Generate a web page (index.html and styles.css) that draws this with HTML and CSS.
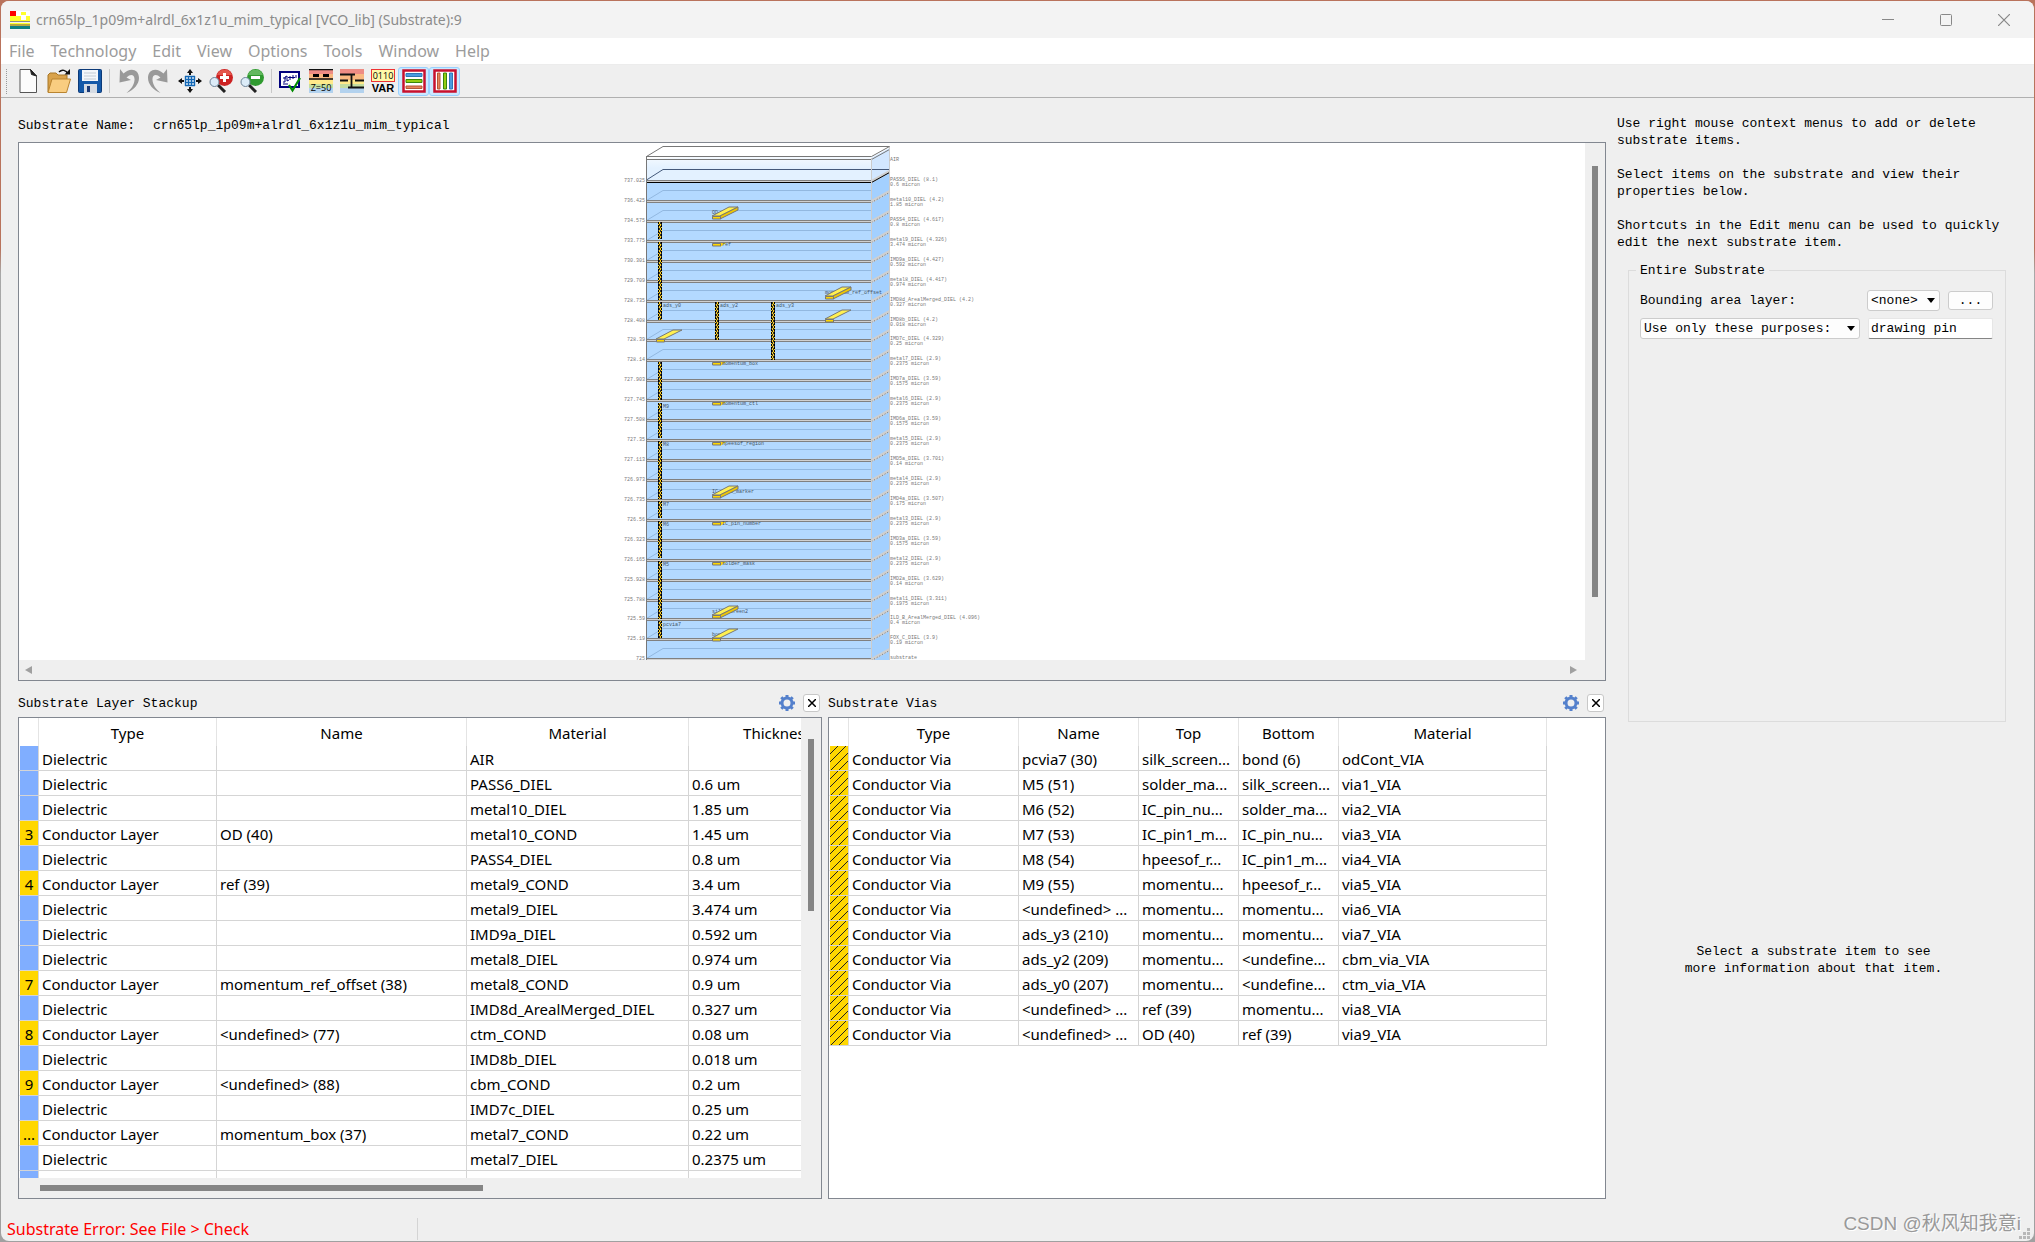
FILE: index.html
```html
<!DOCTYPE html>
<html lang="en">
<head>
<meta charset="utf-8">
<title>Substrate Editor</title>
<link rel="stylesheet" href="styles.css">
</head>
<body>
<div class="window">
  <header class="titlebar">
    <svg class="app-icon" width="20" height="18" viewBox="0 0 20 18"><path fill="#ffff2a" d="M0 5h20v5H0zM0 12h20v1.500H0z"/><path fill="#fff" d="M6 0h14v5H6zM11 5h5v4h-5z"/><path fill="#ffff2a" d="M11 1h5v3h-5z"/><path fill="#f00" d="M0 0h6v5H0z"/><path fill="#8a8a8a" d="M0 10h20v1H0z"/><path fill="#b8a642" d="M0 13h20v2H0z"/><path fill="#108080" d="M0 15h20v3H0z"/></svg>
    <h1 class="title">crn65lp_1p09m+alrdl_6x1z1u_mim_typical [VCO_lib] (Substrate):9</h1>
    <div class="caption-buttons">
      <button type="button" aria-label="Minimize"><svg width="12" height="12"><path d="M0 5.500h12" stroke="#888"/></svg></button>
      <button type="button" aria-label="Maximize"><svg width="12" height="12"><rect x=".5" y=".5" width="11" height="11" rx="1" fill="none" stroke="#888"/></svg></button>
      <button type="button" aria-label="Close"><svg width="12" height="12"><path d="M0 0l12 12M12 0L0 12" stroke="#888" stroke-width="1.200"/></svg></button>
    </div>
  </header>
  <nav class="menubar">
    <button type="button">File</button><button type="button">Technology</button><button type="button">Edit</button><button type="button">View</button><button type="button">Options</button><button type="button">Tools</button><button type="button">Window</button><button type="button">Help</button>
  </nav>
  <div class="toolbar">
    <span class="grip"></span>
    <button type="button" aria-label="New"><svg width="24" height="24" viewBox="0 0 24 24"><path d="M4 .5h10.500L20.500 7v16.500H4z" fill="#fcfcfc" stroke="#555"/><path d="M14.500.5L20.500 7l-5-1.500z" fill="#222" stroke="#222"/></svg></button>
    <button type="button" aria-label="Open"><svg width="24" height="24" viewBox="0 0 24 24"><path d="M1 23V6l2-2h6l2 2h9v5" fill="#d9a24a" stroke="#a87626"/><path d="M1 23.500L5 10h18.500l-4 13.500z" fill="#f9cd80" stroke="#b98430"/><path d="M12 3c3-3 7-2 9 2" fill="none" stroke="#111" stroke-width="1.500"/><path d="M17.500 5.500H23V0z" fill="#111"/></svg></button>
    <button type="button" aria-label="Save"><svg width="24" height="24" viewBox="0 0 24 24"><rect x=".5" y=".5" width="23" height="23" rx="1" fill="#1559a8" stroke="#0c3a78"/><path d="M4 1h16v11H4z" fill="#f4f7fa"/><path d="M6 4h12M6 7h12M6 10h12" stroke="#c3ccd4"/><path d="M6 15h13v9H6z" fill="#d5dbe3"/><path d="M9 17h3v6H9z" fill="#1c3b78"/></svg></button>
    <span class="sep"></span>
    <button type="button" aria-label="Undo"><svg width="24" height="24" viewBox="0 0 24 24"><path d="M4 0L3.500 13.500L15 11L10.500 8.500C15 4 19 6 18.500 11C18.200 16 15 20 10.500 24C18 21 23 15 23 9C23 0 14-2 7.500 4.500z" fill="#999"/></svg></button>
    <button type="button" aria-label="Redo"><svg width="24" height="24" viewBox="0 0 24 24"><path d="M20 0L20.500 13.500L9 11L13.500 8.500C9 4 5 6 5.500 11C5.800 16 9 20 13.500 24C6 21 1 15 1 9C1 0 10-2 16.500 4.500z" fill="#999"/></svg></button>
    <button type="button" aria-label="View all"><svg width="24" height="24" viewBox="0 0 24 24"><path d="M7 7h10v10H7z" fill="#fff"/><path d="M7.500 7v10M10.500 7v10M13.500 7v10M16.500 7v10M7 7.500h10M7 10.500h10M7 13.500h10M7 16.500h10" stroke="#1267b5" stroke-width="1.400"/><path d="M12 6V3M12 18v3M6 12H3M18 12h3" stroke="#111" stroke-width="2"/><path d="M12 0l3 4H9zM12 24l3-4H9zM0 12l4-3v6zM24 12l-4-3v6z" fill="#111"/></svg></button>
    <button type="button" aria-label="Zoom in"><svg width="24" height="24" viewBox="0 0 24 24"><circle cx="15.500" cy="8.500" r="8.500" fill="#cc2222"/><path d="M8 6a8 8 0 0 1 15 0z" fill="#e4564c"/><path d="M15.500 4v9M11 8.500h9" stroke="#fff" stroke-width="3"/><path d="M9 16l7 7" stroke="#222" stroke-width="3"/><circle cx="5.500" cy="13" r="4.500" fill="#dcecf8" stroke="#6d8398"/></svg></button>
    <button type="button" aria-label="Zoom out"><svg width="24" height="24" viewBox="0 0 24 24"><circle cx="15.500" cy="8.500" r="8.500" fill="#2f9a2f"/><path d="M8 6a8 8 0 0 1 15 0z" fill="#62b85e"/><path d="M11 8.500h9" stroke="#fff" stroke-width="3"/><path d="M9 16l7 7" stroke="#222" stroke-width="3"/><circle cx="5.500" cy="13" r="4.500" fill="#dcecf8" stroke="#6d8398"/></svg></button>
    <span class="sep"></span>
    <button type="button" aria-label="Check"><svg width="24" height="24" viewBox="0 0 24 24"><path d="M2 3h19v15H2z" fill="#fff" stroke="#00007c" stroke-width="2"/><path d="M5 13h2V8l2-1v5l2-1M5 9h3M12 7v4M10 8.500h7M15 6v4M5 15h5M18 6v3" stroke="#00007c" fill="none"/><path d="M11 16l3.500 5.500L22 9" fill="none" stroke="#008a00" stroke-width="2.200"/></svg></button>
    <button type="button" aria-label="Impedance"><svg width="24" height="24" viewBox="0 0 24 24"><path d="M0 0h24v5H0z" fill="#ee8c84"/><path d="M0 5h24v6H0z" fill="#f9b880"/><path d="M0 11h24v4H0z" fill="#ffe98a"/><path d="M0 15h24v4H0z" fill="#c3dda0"/><path d="M0 19h24v5H0z" fill="#b3d2ee"/><path d="M0 .5h24M0 10h24" stroke="#111" stroke-width="1.500"/><path d="M4 5h6v3H4zM14 5h6v3h-6z"/><text x="12" y="22" text-anchor="middle" class="icon-text">Z=50</text></svg></button>
    <button type="button" aria-label="Interconnect"><svg width="24" height="24" viewBox="0 0 24 24"><path d="M0 0h24v5H0z" fill="#ee8c84"/><path d="M0 5h24v6H0z" fill="#f9b880"/><path d="M0 11h24v4H0z" fill="#ffe98a"/><path d="M0 15h24v4H0z" fill="#c3dda0"/><path d="M0 19h24v5H0z" fill="#b3d2ee"/><path d="M0 5.500h15M0 11.500h8M8 18.500h16M15 11.500h9M11.500 6v13" stroke="#111" stroke-width="1.800"/></svg></button>
    <button type="button" aria-label="Variables"><svg width="24" height="24" viewBox="0 0 24 24"><rect x=".5" y=".5" width="23" height="12" fill="#fff9a8" stroke="#e33"/><text x="12" y="10" text-anchor="middle" class="icon-text">0110</text><text x="12" y="23" text-anchor="middle" class="icon-text bold">VAR</text></svg></button>
    <button type="button" class="on" aria-label="Layer stackup"><svg width="24" height="24" viewBox="0 0 24 24"><path d="M1.500 1.500h21v21h-21z" fill="#fff" stroke="#c8102e" stroke-width="2.500"/><path d="M4 4.500h16v3H4z" fill="#4a9be0" stroke="#2c76b8"/><path d="M4 10.500h16v3H4z" fill="#94cc10" stroke="#38860a"/><path d="M4 17h16v2.500H4z" fill="#e8835c" stroke="#b35636"/></svg></button>
    <button type="button" class="on" aria-label="Vias"><svg width="24" height="24" viewBox="0 0 24 24"><path d="M1.500 1.500h21v21h-21z" fill="#fff" stroke="#c8102e" stroke-width="2.500"/><path d="M4.500 4h2.500v16H4.500z" fill="#e8835c" stroke="#b35636"/><path d="M10.500 4h3v16h-3z" fill="#94cc10" stroke="#38860a"/><path d="M16.500 4h3v16h-3z" fill="#4a9be0" stroke="#2c76b8"/></svg></button>
  </div>

  <main class="content">
    <div class="left">
      <p class="name-line"><span>Substrate Name:</span><span>crn65lp_1p09m+alrdl_6x1z1u_mim_typical</span></p>
      <section class="frame canvas">
        <div class="canvas-view"><svg id="stack" width="360" height="518" viewBox="622 143 360 518"></svg></div>
        <div class="vscroll"><span class="thumb"></span></div>
        <div class="hscroll-arrows"><span class="arrow-l"></span><span class="arrow-r"></span></div>
      </section>
      <div class="panels">
        <section class="panel stackup">
          <div class="panel-head"><h2>Substrate Layer Stackup</h2>
            <button type="button" class="gear" aria-label="Settings"><svg width="16" height="16" viewBox="0 0 16 16"><circle cx="8" cy="8" r="5" fill="none" stroke="#5480cc" stroke-width="3"/><path d="M8 0v3M8 13v3M0 8h3M13 8h3M2.300 2.300l2 2M11.700 11.700l2 2M2.300 13.700l2-2M11.700 4.300l2-2" stroke="#5480cc" stroke-width="3"/></svg></button>
            <button type="button" class="close" aria-label="Close panel"><svg width="8" height="8"><path d="M0 0l8 8M8 0L0 8" stroke="#000" stroke-width="1.500"/></svg></button></div>
          <div class="frame table-frame">
            <div class="table-view">
            <table class="stackup-table">
              <colgroup><col class="c-mark"><col class="c178"><col class="c250"><col class="c222"><col class="c178"></colgroup>
              <thead><tr><th></th><th>Type</th><th>Name</th><th>Material</th><th>Thickness</th></tr></thead>
              <tbody>
                <tr><td class="d"></td><td>Dielectric</td><td></td><td>AIR</td><td></td></tr>
                <tr><td class="d"></td><td>Dielectric</td><td></td><td>PASS6_DIEL</td><td>0.6 um</td></tr>
                <tr><td class="d"></td><td>Dielectric</td><td></td><td>metal10_DIEL</td><td>1.85 um</td></tr>
                <tr><td class="c">3</td><td>Conductor Layer</td><td>OD (40)</td><td>metal10_COND</td><td>1.45 um</td></tr>
                <tr><td class="d"></td><td>Dielectric</td><td></td><td>PASS4_DIEL</td><td>0.8 um</td></tr>
                <tr><td class="c">4</td><td>Conductor Layer</td><td>ref (39)</td><td>metal9_COND</td><td>3.4 um</td></tr>
                <tr><td class="d"></td><td>Dielectric</td><td></td><td>metal9_DIEL</td><td>3.474 um</td></tr>
                <tr><td class="d"></td><td>Dielectric</td><td></td><td>IMD9a_DIEL</td><td>0.592 um</td></tr>
                <tr><td class="d"></td><td>Dielectric</td><td></td><td>metal8_DIEL</td><td>0.974 um</td></tr>
                <tr><td class="c">7</td><td>Conductor Layer</td><td>momentum_ref_offset (38)</td><td>metal8_COND</td><td>0.9 um</td></tr>
                <tr><td class="d"></td><td>Dielectric</td><td></td><td>IMD8d_ArealMerged_DIEL</td><td>0.327 um</td></tr>
                <tr><td class="c">8</td><td>Conductor Layer</td><td>&lt;undefined&gt; (77)</td><td>ctm_COND</td><td>0.08 um</td></tr>
                <tr><td class="d"></td><td>Dielectric</td><td></td><td>IMD8b_DIEL</td><td>0.018 um</td></tr>
                <tr><td class="c">9</td><td>Conductor Layer</td><td>&lt;undefined&gt; (88)</td><td>cbm_COND</td><td>0.2 um</td></tr>
                <tr><td class="d"></td><td>Dielectric</td><td></td><td>IMD7c_DIEL</td><td>0.25 um</td></tr>
                <tr><td class="c">...</td><td>Conductor Layer</td><td>momentum_box (37)</td><td>metal7_COND</td><td>0.22 um</td></tr>
                <tr><td class="d"></td><td>Dielectric</td><td></td><td>metal7_DIEL</td><td>0.2375 um</td></tr>
                <tr><td class="d"></td><td></td><td></td><td></td><td></td></tr>
              </tbody>
            </table>
            </div>
            <div class="vscroll"><span class="thumb"></span></div>
            <div class="hscroll"><span class="thumb"></span></div>
          </div>
        </section>
        <section class="panel vias">
          <div class="panel-head"><h2>Substrate Vias</h2>
            <button type="button" class="gear" aria-label="Settings"><svg width="16" height="16" viewBox="0 0 16 16"><circle cx="8" cy="8" r="5" fill="none" stroke="#5480cc" stroke-width="3"/><path d="M8 0v3M8 13v3M0 8h3M13 8h3M2.300 2.300l2 2M11.700 11.700l2 2M2.300 13.700l2-2M11.700 4.300l2-2" stroke="#5480cc" stroke-width="3"/></svg></button>
            <button type="button" class="close" aria-label="Close panel"><svg width="8" height="8"><path d="M0 0l8 8M8 0L0 8" stroke="#000" stroke-width="1.500"/></svg></button></div>
          <div class="frame table-frame plain">
            <table class="vias-table">
              <colgroup><col class="c-mark"><col class="c170"><col class="c120"><col class="c100"><col class="c100"><col class="c208"></colgroup>
              <thead><tr><th></th><th>Type</th><th>Name</th><th>Top</th><th>Bottom</th><th>Material</th></tr></thead>
              <tbody>
                <tr><td class="v"></td><td>Conductor Via</td><td>pcvia7 (30)</td><td>silk_screen...</td><td>bond (6)</td><td>odCont_VIA</td></tr>
                <tr><td class="v"></td><td>Conductor Via</td><td>M5 (51)</td><td>solder_ma...</td><td>silk_screen...</td><td>via1_VIA</td></tr>
                <tr><td class="v"></td><td>Conductor Via</td><td>M6 (52)</td><td>IC_pin_nu...</td><td>solder_ma...</td><td>via2_VIA</td></tr>
                <tr><td class="v"></td><td>Conductor Via</td><td>M7 (53)</td><td>IC_pin1_m...</td><td>IC_pin_nu...</td><td>via3_VIA</td></tr>
                <tr><td class="v"></td><td>Conductor Via</td><td>M8 (54)</td><td>hpeesof_r...</td><td>IC_pin1_m...</td><td>via4_VIA</td></tr>
                <tr><td class="v"></td><td>Conductor Via</td><td>M9 (55)</td><td>momentu...</td><td>hpeesof_r...</td><td>via5_VIA</td></tr>
                <tr><td class="v"></td><td>Conductor Via</td><td>&lt;undefined&gt; ...</td><td>momentu...</td><td>momentu...</td><td>via6_VIA</td></tr>
                <tr><td class="v"></td><td>Conductor Via</td><td>ads_y3 (210)</td><td>momentu...</td><td>momentu...</td><td>via7_VIA</td></tr>
                <tr><td class="v"></td><td>Conductor Via</td><td>ads_y2 (209)</td><td>momentu...</td><td>&lt;undefine...</td><td>cbm_via_VIA</td></tr>
                <tr><td class="v"></td><td>Conductor Via</td><td>ads_y0 (207)</td><td>momentu...</td><td>&lt;undefine...</td><td>ctm_via_VIA</td></tr>
                <tr><td class="v"></td><td>Conductor Via</td><td>&lt;undefined&gt; ...</td><td>ref (39)</td><td>momentu...</td><td>via8_VIA</td></tr>
                <tr><td class="v"></td><td>Conductor Via</td><td>&lt;undefined&gt; ...</td><td>OD (40)</td><td>ref (39)</td><td>via9_VIA</td></tr>
              </tbody>
            </table>
          </div>
        </section>
      </div>
    </div>
    <aside class="side">
      <p>Use right mouse context menus to add or delete<br>substrate items.</p>
      <p>Select items on the substrate and view their<br>properties below.</p>
      <p>Shortcuts in the Edit menu can be used to quickly<br>edit the next substrate item.</p>
      <fieldset class="group">
        <legend>Entire Substrate</legend>
        <div class="row">
          <label for="bound">Bounding area layer:</label>
          <span class="select area"><select id="bound"><option>&lt;none&gt;</option></select></span>
          <button type="button" class="more">...</button>
        </div>
        <div class="row">
          <span class="select purposes"><select aria-label="Purposes filter"><option>Use only these purposes:</option></select></span>
          <input type="text" aria-label="Purposes" value="drawing pin">
        </div>
      </fieldset>
      <p class="hint">Select a substrate item to see<br>more information about that item.</p>
    </aside>
  </main>
  <footer class="status"><span class="error">Substrate Error: See File &gt; Check</span></footer>
  <svg class="size-grip" width="12" height="12"><path d="M8 0h3v3H8zM4 4h3v3H4zM8 4h3v3H8zM0 8h3v3H0zM4 8h3v3H4zM8 8h3v3H8z" fill="#b8b8b8"/></svg>
  <span class="watermark">CSDN @秋风知我意i</span>
</div>
<script src="stack.js"></script>
</body>
</html>
```
FILE: styles.css
```css
* { box-sizing: border-box; }
body {
  margin: 0;
  height: 100vh;
  padding: 1px;
  background: linear-gradient(#b9735c 0, #b9735c 20%, #a8a8a8 22%, #a0a0a0 100%);
  font: 16px/20px "Noto Sans", "Noto Sans CJK SC", sans-serif;
  color: #000;
  overflow: hidden;
}
h1, h2, p { margin: 0; font-size: inherit; font-weight: normal; }
button { font: inherit; color: inherit; border: 0; padding: 0; background: none; }
.window {
  position: relative;
  height: 100%;
  display: flex;
  flex-direction: column;
  background: #efefef;
  border-radius: 8px;
  overflow: hidden;
}
.titlebar { height: 37px; flex: none; display: flex; align-items: center; padding-left: 9px; background: #f3f3f3; color: #8c8c8c; }
.app-icon { margin-right: 6px; }
.title { flex: 1; font-size: 14px; }
.caption-buttons { display: flex; padding-right: 1px; }
.caption-buttons button { width: 58px; height: 36px; display: grid; place-items: center; }
.menubar { height: 27px; flex: none; display: flex; gap: 16px; padding-left: 8px; background: #fff; color: #9c9c9c; border-bottom: 1px solid #ececec; }
.toolbar { height: 33px; flex: none; display: flex; align-items: center; padding-left: 5px; border-bottom: 1px solid #b0b0b0; }
.toolbar button { width: 31px; height: 29px; display: grid; place-items: center; }
.toolbar .on { background: #cce8ff; border: 1px solid #99d1ff; border-radius: 3px; }
.grip { width: 6px; height: 25px; border-left: 1px dotted #999; }
.sep { width: 7px; height: 24px; background: linear-gradient(#c8c8c8, #c8c8c8) 4px 0 / 1px 100% no-repeat; }
.icon-text { font: 9px "Open Sans", sans-serif; }
.icon-text.bold { font: bold 11px "Liberation Sans", sans-serif; }

.content, .canvas, .panel-head { font-family: "Liberation Mono", monospace; font-size: 13px; line-height: 17px; }
.content { flex: 1; min-height: 0; display: flex; padding-left: 17px; }
.left { flex: 1; min-width: 0; display: flex; flex-direction: column; }
.name-line { display: flex; gap: 18px; height: 44px; padding-top: 19px; flex: none; }
.frame { border: 1px solid #828790; background: #fff; }
.canvas { flex: 539 0 0; min-height: 0; display: grid; grid-template: minmax(0, 1fr) 20px / minmax(0, 1fr) 20px; background: #efefef; }
.canvas-view { background: #fff; overflow: hidden; display: flex; justify-content: center; }
.canvas-view svg { flex: none; }
.canvas .vscroll { padding-top: 23px; }
.vscroll .thumb { display: block; width: 6px; height: 172px; margin-left: 7px; background: #858585; }
.canvas .thumb { height: 431px; }
.hscroll-arrows { display: flex; justify-content: space-between; align-items: center; padding: 0 8px 0 6px; }
.arrow-l, .arrow-r { border: 4px solid transparent; }
.arrow-l { border-right: 7px solid #a0a0a0; border-left: 0; }
.arrow-r { border-left: 7px solid #a0a0a0; border-right: 0; }

.panels { flex: 519 0 0; min-height: 0; display: flex; gap: 6px; }
.panel { min-width: 0; display: flex; flex-direction: column; }
.stackup { flex: 804 0 0; }
.vias { flex: 778 0 0; }
.panel-head { height: 36px; flex: none; display: flex; align-items: center; padding: 7px 2px 0 0; }
.panel-head h2 { flex: 1; padding-top: 2px; }
.panel-head button { display: grid; place-items: center; }
.gear { width: 16px; height: 18px; margin-right: 8px; }
.close { width: 17px; height: 18px; background: #fff; border: 1px solid #c8c8c8; border-radius: 3px; }
.table-frame { flex: 1; min-height: 0; display: grid; grid-template: minmax(0, 1fr) 20px / minmax(0, 1fr) 20px; background: #efefef; }
.table-frame.plain { display: block; background: #fff; overflow: hidden; }
.table-view { overflow: hidden; background: #fff; }
.table-frame .vscroll { padding-top: 21px; }
.table-frame .hscroll { padding: 7px 0 0 21px; }
.hscroll .thumb { display: block; width: 443px; height: 6px; background: #858585; }
table { table-layout: fixed; border-collapse: separate; border-spacing: 0; font: 15px/20px "Noto Sans", sans-serif; }
.stackup-table { width: 848px; }
.vias-table { width: 718px; }
.c-mark { width: 20px; }
.c100 { width: 100px; }
.c120 { width: 120px; }
.c170 { width: 170px; }
.c178 { width: 178px; }
.c208 { width: 208px; }
.c222 { width: 222px; }
.c250 { width: 250px; }
th { height: 28px; padding: 2px 0 0; font-weight: normal; border-right: 1px solid #e4e4e4; }
td { height: 25px; padding: 1px 0 0 3px; white-space: nowrap; overflow: hidden; border-right: 1px solid #d5d5d5; border-bottom: 1px solid #d5d5d5; }
td:first-child { padding: 1px 0 0; text-align: center; border-left: 1px solid #fff; }
.d { background: #80aeff; }
.c { background: #ffd700; }
.v { background: repeating-linear-gradient(135deg, #ffd700 0 5px, #222 5px 6px); }

.side { width: 428px; flex: none; padding: 17px 28px 0 11px; display: flex; flex-direction: column; }
.side p { margin-bottom: 17px; white-space: nowrap; }
.group { margin: -6px 0 0 11px; height: 460px; padding: 11px 12px 0 11px; border: 1px solid #dcdcdc; min-width: 0; }
.group legend { padding: 0 4px; margin-left: -4px; }
.row { display: flex; align-items: center; gap: 8px; margin-bottom: 7px; }
.row label { flex: 1; }
.select { position: relative; display: block; }
.select::after { content: ""; position: absolute; right: 5px; top: 8px; border: 4px solid transparent; border-top: 5px solid #000; border-bottom: 0; pointer-events: none; }
.area { width: 73px; }
.purposes { width: 220px; }
select { appearance: none; display: block; width: 100%; height: 21px; padding: 0 3px; font: inherit; color: #000; background: #fdfdfd; border: 1px solid #ccc; border-radius: 3px; }
.more { width: 45px; height: 19px; background: #fdfdfd; border: 1px solid #ccc; border-radius: 3px; line-height: 15px; }
.row input { flex: 1; min-width: 0; height: 21px; padding: 0 2px; font: inherit; background: #fff; border: 1px solid #e6e6e6; border-bottom-color: #858585; border-radius: 2px; }
.side .hint { margin: auto 0; padding: 0 0 2px 4px; text-align: center; }

.status { height: 42px; flex: none; display: flex; align-items: center; padding: 18px 0 0 6px; color: #f00; }
.error { width: 411px; line-height: 22px; border-right: 1px solid #d4d4d4; }
.size-grip { position: absolute; right: 3px; bottom: 1px; }
.watermark { position: absolute; right: 13px; bottom: 5px; font-family: "Liberation Sans", "Noto Sans CJK SC", sans-serif; font-size: 19px; line-height: 24px; color: #999; text-shadow: 1px 1px 0 #fff; }
#stack text { font: 5px "Liberation Mono", monospace; fill: #777; }
#stack .tag { fill: #456; }
```
FILE: stack.js
```js
// Draws the layer stack: one slab per dielectric, then conductors and vias.
const layers = [
  ["PASS6_DIEL (8.1)", "0.6", "737.025"], ["metal10_DIEL (4.2)", "1.85", "736.425"],
  ["PASS4_DIEL (4.617)", "0.8", "734.575"], ["metal9_DIEL (4.326)", "3.474", "733.775"],
  ["IMD9a_DIEL (4.427)", "0.592", "730.301"], ["metal8_DIEL (4.417)", "0.974", "729.709"],
  ["IMD8d_ArealMerged_DIEL (4.2)", "0.327", "728.735"], ["IMD8b_DIEL (4.2)", "0.018", "728.408"],
  ["IMD7c_DIEL (4.329)", "0.25", "728.39"], ["metal7_DIEL (2.9)", "0.2375", "728.14"],
  ["IMD7a_DIEL (3.59)", "0.1575", "727.903"], ["metal6_DIEL (2.9)", "0.2375", "727.745"],
  ["IMD6a_DIEL (3.59)", "0.1575", "727.508"], ["metal5_DIEL (2.9)", "0.2375", "727.35"],
  ["IMD5a_DIEL (3.701)", "0.14", "727.113"], ["metal4_DIEL (2.9)", "0.2375", "726.973"],
  ["IMD4a_DIEL (3.507)", "0.175", "726.735"], ["metal3_DIEL (2.9)", "0.2375", "726.56"],
  ["IMD3a_DIEL (3.59)", "0.1575", "726.323"], ["metal2_DIEL (2.9)", "0.2375", "726.165"],
  ["IMD2a_DIEL (3.629)", "0.14", "725.928"], ["metal1_DIEL (3.311)", "0.1975", "725.788"],
  ["ILD_B_ArealMerged_DIEL (4.096)", "0.4", "725.59"], ["FOX_C_DIEL (3.9)", "0.19", "725.19"],
  ["substrate", "", "725"]
];
const L = 646.5, R = 871.5, B = 889.5;
const path = (d, a) => `<path d="${d}" ${a}/>`;
const text = (x, y, s, a = "") => `<text x="${x}" y="${y}" ${a}>${s}</text>`;
let out = `<defs><linearGradient id="air" x1="0" y1="0" x2="0" y2="1"><stop offset=".1" stop-color="#fff"/><stop offset=".6" stop-color="#e3f1ff"/></linearGradient>
<pattern id="via" width="2" height="4" patternUnits="userSpaceOnUse"><path d="M0 0h2v4H0z" fill="#333"/><path d="M0 0h1v2H0zM1 2h1v2H1z" fill="#ffd21c"/></pattern></defs>`;
out += path(`M${L} 159V182H${R}L${B} 171V147Z`, 'fill="url(#air)"');
out += path(`M${R} 158L${B} 148V172L${R} 182Z`, 'fill="#d2e7ff"');
out += path(`M${L} 182H${R}V661H${L}Z`, 'fill="#b3d9ff"');
out += path(`M${R} 182L${B} 172V661H${R}Z`, 'fill="#a3d0ff"');
out += path(`M${L} 156.500L663 146.500H${B}L${R} 156.500Z`, 'fill="#fff" stroke="#777"');
out += path(`M${L} 159.500H${R}L${B} 149.500`, 'fill="none" stroke="#777"');
out += path(`M${L} 180L663 169.500H${B}`, 'fill="none" stroke="#44597a"');
layers.forEach(([name, um, z], k) => {
  const y = Math.round(180 + k * 19.93) + 0.5;
  if (k) out += path(`M${L} ${y}L663 ${y - 10}H${R}`, 'fill="none" stroke="#92b8e0"');
  out += path(`M${L} ${y}H${R}V${y + 2}H${L}Z`, 'fill="#d0d0d0"');
  out += path(`M${R} ${y + 1}L${B} ${y - 9}`, 'stroke="#cfcfcf" stroke-width="3"');
  out += path(`M${R} ${y + 2}L${B} ${y - 8}`, `stroke="${k ? "#777" : "#000"}" stroke-dasharray="${k ? "1 2" : "none"}"`);
  out += path(`M${L} ${y}H${R}`, 'stroke="#808080"');
  out += path(`M${L} ${y + 2}H${R}`, `stroke="${k ? "#808080" : "#000"}"`);
  out += text(645, y + 1, z, 'text-anchor="end"');
  out += text(890, y, name);
  if (um) out += text(890, y + 5, um + " micron");
});
out += path(`M${L} 156V661`, 'stroke="#777"');
out += path(`M${R} 158V661M${B} 147V661`, 'stroke="#ccc"');
out += text(890, 161, "AIR");

// Conductors: kind, x, y, label
[["thick", 712, 218, "OD"], ["flat", 712, 245, "ref"], ["thick", 825, 298, "momentum_ref_offset"],
 ["sheet", 825, 321, ""], ["sheet", 656, 341, ""], ["flat", 712, 364, "momentum_box"],
 ["flat", 712, 404, "momentum_ctl"], ["flat", 712, 444, "hpeesof_region"], ["thick", 712, 497, "IC_pin1_marker"],
 ["flat", 712, 524, "IC_pin_number"], ["flat", 712, 564, "solder_mask"], ["thick", 712, 617, "silk_screen2"],
 ["sheet", 712, 640, "bond"]].forEach(([kind, x, y, label]) => {
  const edge = 'stroke="#777"';
  if (kind === "flat") {
    out += path(`M${x + 8} ${y - 2}h6l-6 4z`, 'fill="#ffd700"');
    out += text(x + 10, y + 1, label, 'class="tag"');
  } else {
    if (label) out += text(x, y - 4, label, 'class="tag"');
    out += path(`M${x} ${y - 2}L${x + 17} ${y - 11}H${x + 26}L${x + 8} ${y - 2}Z`, `fill="#fff050" ${edge}`);
    if (kind === "thick") out += path(`M${x + 8} ${y - 2}L${x + 26} ${y - 11}V${y - 8}L${x + 8} ${y + 1}Z`, `fill="#f0c800" ${edge}`);
  }
  out += path(`M${x + 0.5} ${y - 1.5}h8v2.500h-8z`, `fill="#ffd700" ${edge}`);
});

// Vias: x, top, bottom, label
[[658, 222, 239, ""], [658, 242, 300, ""], [658, 302, 320, "ads_y0"], [715, 302, 340, "ads_y2"], [771, 302, 360, "ads_y3"],
 [658, 362, 400, ""], [658, 403, 438, "M9"], [658, 441, 499, "M8"], [658, 501, 518, "M7"], [658, 521, 558, "M6"],
 [658, 561, 619, "M5"], [658, 621, 638, "pcvia7"]].forEach(([x, a, b, label]) => {
  out += `<rect x="${x}" y="${a}" width="4" height="${b - a}" fill="url(#via)"/>`;
  out += path(`M${x + 0.5} ${a}V${b}M${x + 3.5} ${a}V${b}`, 'stroke="#000" stroke-dasharray="2 1"');
  if (label) out += text(x + 5, a + 5, label, 'class="tag"');
});
document.getElementById("stack").innerHTML = out;
```
